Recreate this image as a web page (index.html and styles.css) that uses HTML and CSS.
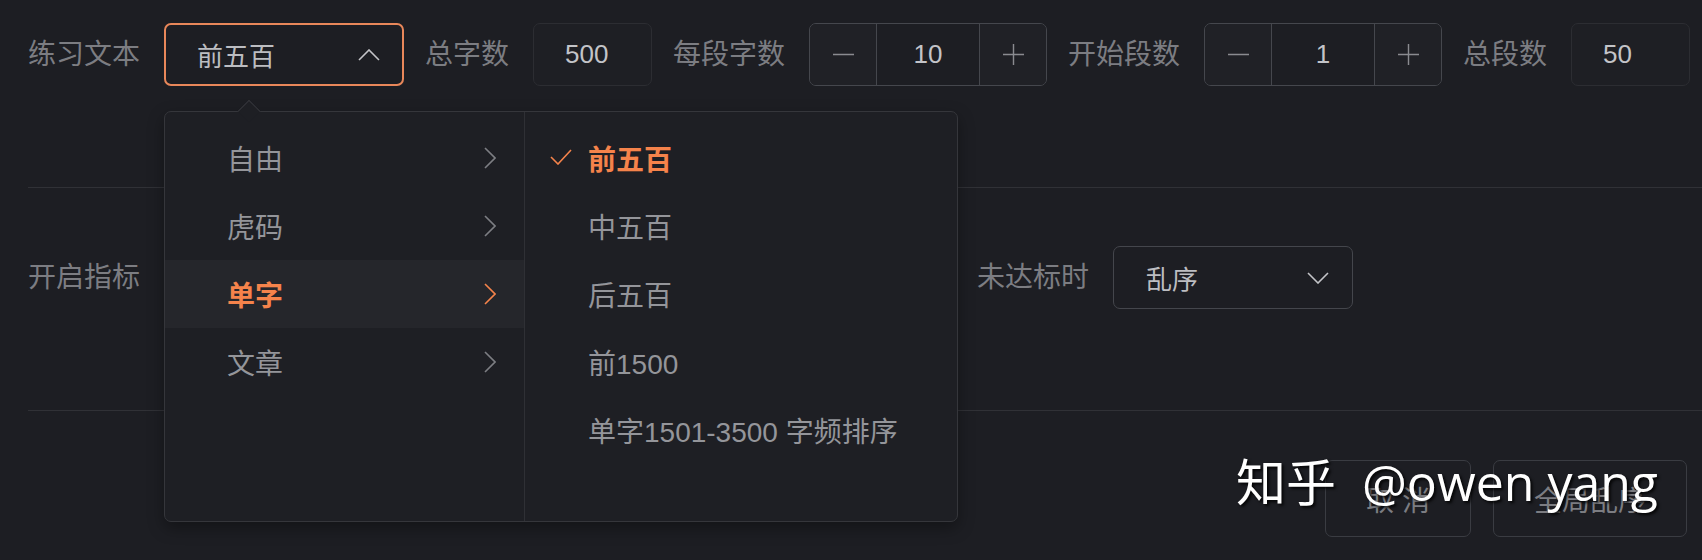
FILE: index.html
```html
<!DOCTYPE html>
<html lang="zh-CN">
<head>
<meta charset="utf-8">
<title>练习设置</title>
<link rel="stylesheet" href="styles.css">
</head>
<body>
<div class="form">
  <div class="row row-top">
    <div class="line">
      <span class="lbl">练习文本</span>
      <div class="select select-open"><span class="select-val">前五百</span>
        <svg class="chev-h" width="22" height="12" viewBox="0 0 22 12"><path d="M1 11 L11 1 L21 11" /></svg>
      </div>
      <span class="lbl">总字数</span>
      <div class="num-box">500</div>
      <span class="lbl">每段字数</span>
      <div class="stepper">
        <span class="step-btn"><svg width="22" height="22" viewBox="0 0 22 22"><path d="M0 11 H22" /></svg></span>
        <span class="step-val">10</span>
        <span class="step-btn"><svg width="22" height="22" viewBox="0 0 22 22"><path d="M0 11 H22 M11 0 V22" /></svg></span>
      </div>
      <span class="lbl">开始段数</span>
      <div class="stepper">
        <span class="step-btn"><svg width="22" height="22" viewBox="0 0 22 22"><path d="M0 11 H22" /></svg></span>
        <span class="step-val">1</span>
        <span class="step-btn"><svg width="22" height="22" viewBox="0 0 22 22"><path d="M0 11 H22 M11 0 V22" /></svg></span>
      </div>
      <span class="lbl">总段数</span>
      <div class="num-box num-small">50</div>
    </div>
  </div>
  <div class="row row-mid">
    <div class="line">
      <span class="lbl">开启指标</span>
      <div class="mid-right">
        <span class="lbl">未达标时</span>
        <div class="select"><span class="select-val">乱序</span>
          <svg class="chev-h" width="22" height="12" viewBox="0 0 22 12"><path d="M1 1 L11 11 L21 1" /></svg>
        </div>
      </div>
    </div>
  </div>
  <div class="row row-bottom">
    <div class="actions">
      <button class="btn btn-cancel">取 消</button>
      <button class="btn btn-shuffle">全局乱序</button>
    </div>
  </div>
</div>

<div class="cascader">
  <span class="caret"></span>
  <ul class="menu menu-left">
    <li class="item"><span>自由</span><svg class="chev-r" width="12" height="22" viewBox="0 0 12 22"><path d="M1 1 L11 11 L1 21" /></svg></li>
    <li class="item"><span>虎码</span><svg class="chev-r" width="12" height="22" viewBox="0 0 12 22"><path d="M1 1 L11 11 L1 21" /></svg></li>
    <li class="item item-active"><span>单字</span><svg class="chev-r" width="12" height="22" viewBox="0 0 12 22"><path d="M1 1 L11 11 L1 21" /></svg></li>
    <li class="item"><span>文章</span><svg class="chev-r" width="12" height="22" viewBox="0 0 12 22"><path d="M1 1 L11 11 L1 21" /></svg></li>
  </ul>
  <ul class="menu menu-right">
    <li class="item item-checked"><svg class="check" width="22" height="16" viewBox="0 0 22 16"><path d="M1 8 L8 15 L21 1" /></svg><span>前五百</span></li>
    <li class="item"><span>中五百</span></li>
    <li class="item"><span>后五百</span></li>
    <li class="item"><span>前1500</span></li>
    <li class="item"><span>单字1501-3500 字频排序</span></li>
  </ul>
</div>

<div class="watermark"><span class="wm-cn">知乎</span><span class="wm-en">@owen yang</span></div>
</body>
</html>
```

FILE: styles.css
```css
* { box-sizing: border-box; }

html, body {
  margin: 0;
  padding: 0;
  background: #1d1e23;
  width: 1702px;
  height: 560px;
  overflow: hidden;
  font-family: "Liberation Sans", "Noto Sans CJK SC", sans-serif;
}

.form {
  padding-left: 28px;
}

.row {
  border-bottom: 1px solid #303136;
}

.row-top {
  height: 188px;
  padding-top: 23px;
}

.row-mid {
  height: 223px;
  padding-top: 58px;
}

.row-bottom {
  border-bottom: none;
  padding-top: 49px;
}

.line {
  display: flex;
  align-items: center;
  height: 63px;
}

.lbl {
  font-size: 28px;
  color: #7c7d82;
  margin-right: 24px;
  white-space: nowrap;
  line-height: 1;
}

.select,
.num-box,
.stepper {
  height: 63px;
  margin-right: 21px;
  border-radius: 7px;
  flex: none;
}

.select {
  width: 240px;
  border: 1px solid #44464c;
  display: flex;
  align-items: center;
  justify-content: space-between;
  padding: 0 23px 0 32px;
}

.select-open {
  border: 2px solid #e8875a;
  padding-left: 31px;
  padding-right: 22px;
}

.select-val {
  font-size: 26px;
  color: #bcbdc1;
}

.chev-h path {
  fill: none;
  stroke: #c3c4c8;
  stroke-width: 1.6;
}

.num-box {
  width: 119px;
  border: 1px solid #2c2d32;
  background: #1e1f24;
  display: flex;
  align-items: center;
  padding-left: 31px;
  font-size: 26px;
  color: #c3c4c8;
}

.stepper {
  width: 238px;
  border: 1px solid #45474d;
  display: flex;
  overflow: hidden;
}

.step-btn {
  width: 66px;
  display: flex;
  align-items: center;
  justify-content: center;
  background: #202126;
}

.step-btn svg {
  width: 21px;
  height: 21px;
}

.step-btn path {
  fill: none;
  stroke: #8a8b90;
  stroke-width: 1.5;
}

.step-val {
  flex: 1;
  border-left: 1px solid #45474d;
  border-right: 1px solid #45474d;
  display: flex;
  align-items: center;
  justify-content: center;
  font-size: 26px;
  color: #c3c4c8;
  background: #1d1e23;
}

.mid-right {
  display: flex;
  align-items: center;
  margin-left: 813px;
}

.actions {
  display: flex;
  justify-content: flex-end;
  gap: 22px;
  padding-right: 15px;
}

.btn {
  height: 77px;
  border: 1px solid #3a3c42;
  border-radius: 7px;
  background: transparent;
  color: #7c7d82;
  font-family: "Liberation Sans", "Noto Sans CJK SC", sans-serif;
  font-size: 28px;
  padding: 0;
}

.btn-cancel { width: 146px; }
.btn-shuffle { width: 194px; }

/* cascader dropdown overlay */
.cascader {
  position: absolute;
  left: 164px;
  top: 111px;
  width: 794px;
  height: 411px;
  border: 1px solid #35363b;
  border-radius: 7px;
  background: #1e1f24;
  display: flex;
  box-shadow: 0 6px 16px rgba(0, 0, 0, 0.35);
}

.caret {
  position: absolute;
  left: 76px;
  top: -9px;
  width: 16px;
  height: 16px;
  background: #1e1f24;
  border-left: 1px solid #35363b;
  border-top: 1px solid #35363b;
  transform: rotate(45deg);
}

.menu {
  list-style: none;
  margin: 0;
  padding: 12px 0 0;
}

.menu-left {
  width: 360px;
  border-right: 1px solid #2f3035;
}

.menu-right {
  flex: 1;
}

.item {
  height: 68px;
  display: flex;
  align-items: center;
  font-size: 28px;
  color: #94959a;
  position: relative;
}

.menu-left .item {
  justify-content: space-between;
  padding: 0 28px 0 62px;
}

.menu-right .item {
  padding-left: 63px;
}

.item-active {
  background: #25262b;
  color: #f5834b;
  font-weight: 700;
}

.chev-r path {
  fill: none;
  stroke: #7d7e83;
  stroke-width: 1.6;
}

.item-active .chev-r path {
  stroke: #f5834b;
}

.item-checked {
  color: #f5834b;
  font-weight: 700;
}

.check {
  position: absolute;
  left: 25px;
  top: 25px;
}

.check path {
  fill: none;
  stroke: #f5834b;
  stroke-width: 1.6;
}

/* watermark */
.watermark {
  position: absolute;
  left: 1236px;
  top: 449px;
  color: #ffffff;
  font-size: 50px;
  line-height: 1.2;
  white-space: nowrap;
  text-shadow: 2px 2px 3px rgba(0, 0, 0, 0.85);
}

.wm-cn {
  font-family: "Noto Sans CJK SC", sans-serif;
  font-weight: 400;
}

.wm-en {
  margin-left: 26px;
  font-family: "Open Sans", "Noto Sans", sans-serif;
}
```
